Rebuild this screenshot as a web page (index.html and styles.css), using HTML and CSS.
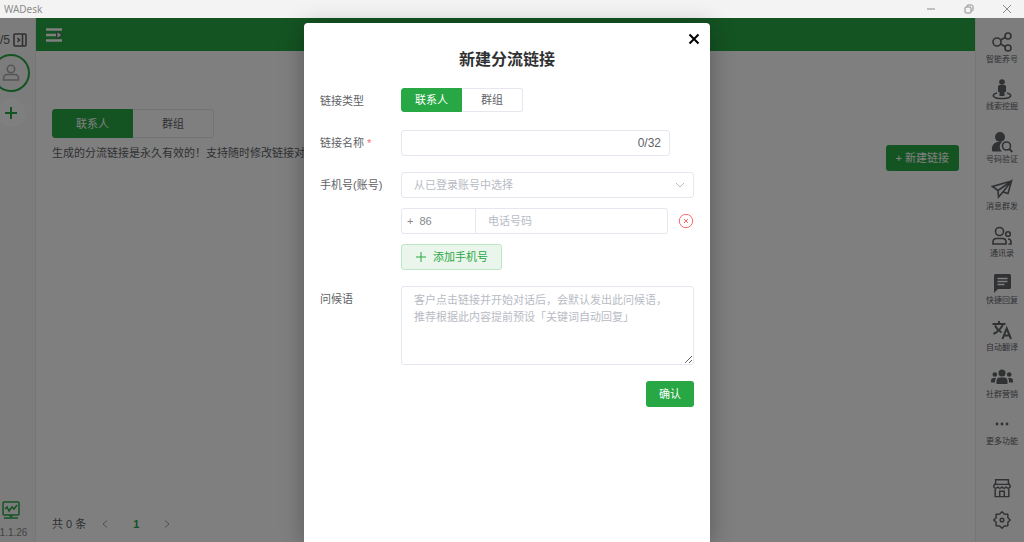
FILE: index.html
```html
<!DOCTYPE html>
<html lang="zh-CN">
<head>
<meta charset="utf-8">
<meta name="viewport" content="width=device-width, initial-scale=1">
<title>WADesk</title>
<link rel="stylesheet" href="styles.css">
</head>
<body class="window">
<header class="titlebar">
  <span class="titlebar-name">WADesk</span>
  <div class="window-controls">
    <button class="plain" aria-label="最小化"><svg width="10" height="10" viewBox="0 0 10 10"><path d="M1 5h8"/></svg></button>
    <button class="plain" aria-label="还原"><svg width="10" height="10" viewBox="0 0 10 10"><rect x="1" y="3" width="6" height="6" rx="1"/><path d="M3 2.6V2q0-1 1-1h3.5Q9 1 9 2.5V6q0 1-1.6 1"/></svg></button>
    <button class="plain" aria-label="关闭"><svg width="10" height="10" viewBox="0 0 10 10"><path d="M1 1l8 8M9 1L1 9"/></svg></button>
  </div>
</header>

<div class="app">
  <aside class="accounts">
    <div class="accounts-count"><span>/5</span>
      <svg class="ico" width="14" height="14" viewBox="0 0 14 14"><rect x="1" y="1" width="12" height="12" rx="1"/><path d="M9.500 1v12M4.500 5l2 2-2 2"/></svg>
    </div>
    <button class="plain avatar" aria-label="账号">
      <svg width="18" height="18" viewBox="0 0 18 18"><circle cx="9" cy="5" r="3.700"/><path d="M1.500 16v-1.500q0-4 4-4h7q4 0 4 4V16z"/></svg>
    </button>
    <button class="plain add-account" aria-label="添加账号">
      <svg width="14" height="14" viewBox="0 0 14 14"><path d="M7 1v12M1 7h12"/></svg>
    </button>
    <div class="accounts-foot">
      <svg class="monitor" width="20" height="20" viewBox="0 0 20 20"><rect x="2" y="2" width="16" height="13" rx="1"/><path d="M4 9l2-2 2 4 3-4 2 2 3-4M3 18h14M8 15l2 1.500 2-1.500"/></svg>
      <span>1.1.26</span>
    </div>
  </aside>

  <main class="page">
    <div class="topbar">
      <button class="plain" aria-label="展开菜单"><svg width="16" height="14" viewBox="0 0 16 14"><path d="M0 1.500h16M0 7h10M0 12.500h16" stroke="#fff" stroke-width="2.400"/><path d="M11 3.500L16 7l-5 3.500z" fill="#fff"/></svg></button>
    </div>
    <div class="content">
      <div class="segments segments-wide" role="radiogroup" aria-label="链接列表">
        <label class="segment"><input type="radio" name="list" checked><span>联系人</span></label>
        <label class="segment"><input type="radio" name="list"><span>群组</span></label>
      </div>
      <div class="content-row">
        <p class="hint">生成的分流链接是永久有效的！支持随时修改链接对应的账号</p>
        <button class="primary">+ 新建链接</button>
      </div>
      <nav class="pager" aria-label="分页">
        <span>共 0 条</span>
        <button class="plain" aria-label="上一页"><svg width="8" height="10" viewBox="0 0 8 10"><path d="M6 1.500L2 5l4 3.500"/></svg></button>
        <button class="plain pager-current">1</button>
        <button class="plain" aria-label="下一页"><svg width="8" height="10" viewBox="0 0 8 10"><path d="M2 1.500L6 5 2 8.500"/></svg></button>
      </nav>
    </div>
  </main>

  <nav class="tools" aria-label="工具">
    <div class="tools-group">
      <button class="plain tool"><svg class="ico" viewBox="0 0 22 22"><circle cx="6" cy="11" r="4"/><circle cx="17" cy="5" r="3"/><circle cx="17" cy="17" r="3"/><path d="M9.500 9l5-2.700M9.500 13l5 2.700"/></svg><span>智能养号</span></button>
      <button class="plain tool"><svg class="solid" viewBox="0 0 22 22"><circle cx="11" cy="4" r="2.800"/><path d="M7 8.500Q7 7 8.500 7h5Q15 7 15 8.500V14h-1.500v4h-5v-4H7z"/><path d="M6 15c-6 1.500-5 5.500 5 5.500s11-4 5-5.500" fill="none" stroke="currentColor" stroke-width="1.600"/></svg><span>线索挖掘</span></button>
    </div>
    <div class="tools-group">
      <button class="plain tool"><svg class="solid" viewBox="0 0 22 22"><circle cx="9" cy="6" r="5"/><path d="M1 20q-1-7 5-9h5a6 6 0 0 0 0 9.500H2z"/><circle cx="15.500" cy="15" r="4" fill="none" stroke="currentColor" stroke-width="1.600"/><path d="M18.300 18l3 3" stroke="currentColor" stroke-width="1.800"/></svg><span>号码验证</span></button>
      <button class="plain tool"><svg class="ico" viewBox="0 0 22 22"><path d="M20.500 3L1.500 8.500l5.500 4L20.500 3l-3.500 12.500-5-1.500-4.500 5-.5-6.500M12 14l8.500-11"/></svg><span>消息群发</span></button>
      <button class="plain tool"><svg class="ico" viewBox="0 0 22 22"><circle cx="8.500" cy="6.500" r="4"/><path d="M2 19v-2q0-3.500 3.500-3.500h6q3.500 0 3.500 3.500v2zM17 14q3 0 3 3v2h-2.500"/><circle cx="17" cy="9" r="2.300"/></svg><span>通讯录</span></button>
      <button class="plain tool"><svg class="solid" viewBox="0 0 22 22"><path d="M3 3.500Q3 2 4.500 2h14Q20 2 20 3.500v12q0 1.500-1.500 1.500H7l-4 4z"/><path d="M6.500 6.500h10M6.500 9.500h10M6.500 12.500h7" stroke="#fff" stroke-width="1.400"/></svg><span>快捷回复</span></button>
      <button class="plain tool"><svg class="ico" viewBox="0 0 22 22"><path d="M1.500 5h13M8 2v3M2.500 15Q10 11 12 5M4 6.500q2 4.500 6.500 7" stroke-width="2"/><path d="M11.500 20l4.200-10.500L20 20M13 16.500h5.500" stroke-width="2"/></svg><span>自动翻译</span></button>
      <button class="plain tool"><svg class="solid" viewBox="0 0 22 22"><circle cx="11" cy="7" r="3.500"/><circle cx="3.800" cy="8.500" r="2.300"/><circle cx="18.200" cy="8.500" r="2.300"/><path d="M5.500 18v-3q0-3.500 3.500-3.500h4q3.500 0 3.500 3.500v3zM0 16.500V15q0-3 2.500-3H5q-1.200 1.500-1 4.500zM22 16.500V15q0-3-2.500-3H17q1.200 1.500 1 4.500z"/></svg><span>社群营销</span></button>
      <button class="plain tool"><svg class="solid" viewBox="0 0 22 22"><circle cx="6" cy="11" r="1.400"/><circle cx="11" cy="11" r="1.400"/><circle cx="16" cy="11" r="1.400"/></svg><span>更多功能</span></button>
    </div>
    <div class="tools-foot">
      <button class="plain tool" aria-label="商店"><svg class="ico" viewBox="0 0 22 22"><path d="M4 2h14v5H4zM4 5.500L2 8.500V10q2 2.500 4.500 0 2 2.500 4.500 0 2.200 2.500 4.500 0 2.200 2.500 4.500 0V8.500l-2-3M3.500 12v8.500h15V12M8.500 20.500v-6h5v6"/></svg></button>
      <button class="plain tool" aria-label="设置"><svg class="ico" viewBox="0 0 22 22"><path d="M11 2l2.500 2.500 3.900.1.100 3.900L20 11l-2.500 2.500-.1 3.900-3.900.1L11 20l-2.500-2.500-3.900-.1-.1-3.900L2 11l2.500-2.500.1-3.900 3.900-.1z" stroke-linejoin="round"/><circle cx="11" cy="11" r="2"/></svg></button>
    </div>
  </nav>

  <div class="overlay">
    <section class="dialog" role="dialog" aria-modal="true" aria-labelledby="dialog-title">
      <button class="plain dialog-close" aria-label="关闭"><svg width="12" height="12" viewBox="0 0 12 12"><path d="M1.500 1.500l9 9M10.500 1.500l-9 9"/></svg></button>
      <h1 class="dialog-title" id="dialog-title">新建分流链接</h1>
      <form class="form">
        <span class="form-label" id="type-label">链接类型</span>
        <div class="segments" role="radiogroup" aria-labelledby="type-label">
          <label class="segment"><input type="radio" name="type" checked><span>联系人</span></label>
          <label class="segment"><input type="radio" name="type"><span>群组</span></label>
        </div>

        <label class="form-label form-label-name" for="link-name">链接名称 <span class="required">*</span></label>
        <div class="field field-name">
          <input id="link-name" type="text" maxlength="32">
          <span class="counter">0/32</span>
        </div>

        <label class="form-label" for="account">手机号(账号)</label>
        <div class="phones">
          <div class="field field-select">
            <select id="account"><option>从已登录账号中选择</option></select>
            <svg width="10" height="10" viewBox="0 0 10 10"><path d="M1 3l4 4 4-4"/></svg>
          </div>
          <div class="phone-row">
            <div class="field phone">
              <label class="phone-code"><span>+</span><input type="text" value="86" aria-label="国家代码"></label>
              <input class="phone-number" type="tel" placeholder="电话号码" aria-label="电话号码">
            </div>
            <button type="button" class="plain remove" aria-label="删除手机号"><svg width="16" height="16" viewBox="0 0 16 16"><circle cx="8" cy="8" r="6.700"/><path d="M6 6l4 4M10 6l-4 4"/></svg></button>
          </div>
          <button type="button" class="add-phone"><svg width="12" height="12" viewBox="0 0 12 12"><path d="M6 1v10M1 6h10"/></svg>添加手机号</button>
        </div>

        <label class="form-label" for="greeting">问候语</label>
        <textarea class="greeting" id="greeting" placeholder="客户点击链接并开始对话后，会默认发出此问候语，推荐根据此内容提前预设「关键词自动回复」"></textarea>

        <button type="button" class="primary submit">确认</button>
      </form>
    </section>
  </div>
</div>
</body>
</html>
```

FILE: styles.css
```css
:root {
  --green: #28a745;
  --text: #606266;
  --line: #e4e7ed;
  --faint: #b8bbc4;
}

* { box-sizing: border-box; }

.window {
  margin: 0;
  height: 100vh;
  display: flex;
  flex-direction: column;
  overflow: hidden;
  font: 11px/16px "Liberation Sans", "Noto Sans CJK SC", sans-serif;
  color: var(--text);
}

button, input, select, textarea { font: inherit; color: inherit; }
svg { display: block; fill: none; stroke: currentColor; flex: none; }

.plain {
  display: flex;
  align-items: center;
  justify-content: center;
  padding: 0;
  border: 0;
  background: none;
}

.ico { stroke-width: 1.6; }
.solid { fill: currentColor; stroke: none; }

/* Title bar */
.titlebar {
  display: flex;
  flex: none;
  justify-content: space-between;
  align-items: center;
  height: 18px;
  padding: 0 12px 0 4px;
  background: #f3f3f3;
  color: #8c8c8c;
  font-family: "Noto Sans", sans-serif;
  font-size: 10px;
}
.window-controls { display: flex; gap: 28px; }

.app {
  position: relative;
  display: flex;
  flex: 1;
  min-height: 0;
  background: #fff;
}

/* Accounts column */
.accounts {
  display: flex;
  flex: none;
  flex-direction: column;
  align-items: center;
  width: 36px;
  padding: 14px 14px 4px 0;
  overflow: hidden;
  background: #f8f8f8;
  border-right: 1px solid #ededed;
}
.accounts-count {
  display: flex;
  align-items: center;
  align-self: flex-start;
  gap: 3px;
  margin-bottom: 6px;
  font-size: 12px;
}
.avatar {
  flex: none;
  width: 38px;
  height: 38px;
  border: 2px solid var(--green);
  border-radius: 50%;
  color: #aaa;
}
.add-account {
  flex: none;
  width: 28px;
  height: 28px;
  margin-top: 7px;
  border-radius: 50%;
  background: #fff;
  color: var(--green);
}
.add-account svg { stroke-width: 2; }
.avatar svg, .monitor { stroke-width: 1.5; }
.accounts-foot {
  display: flex;
  flex-direction: column;
  align-items: center;
  gap: 8px;
  margin-top: auto;
  color: #85878c;
  font-size: 10px;
  line-height: 10px;
}
.accounts-foot span { padding-left: 6px; }
.monitor { color: var(--green); }

/* Page behind the dialog */
.page {
  display: flex;
  flex: 1;
  flex-direction: column;
  min-width: 0;
}
.topbar {
  display: flex;
  flex: none;
  align-items: center;
  height: 33px;
  padding: 0 10px;
  background: var(--green);
}
.content {
  display: flex;
  flex: 1;
  flex-direction: column;
  padding: 58px 16px 10px;
}
.content-row {
  display: flex;
  justify-content: space-between;
  align-items: flex-start;
  padding-top: 7px;
}
.hint { margin: 0; }
.primary {
  height: 26px;
  padding: 0 10px;
  border: 0;
  border-radius: 3px;
  background: var(--green);
  color: #fff;
}
.pager {
  display: flex;
  align-items: center;
  gap: 15px;
  margin-top: auto;
}
.pager > span { margin-right: -4px; }
.pager button { width: 16px; height: 16px; }
.pager svg { color: #a0a0a0; }
.pager .pager-current { color: var(--green); font-weight: bold; }

/* Segmented radios */
.segments {
  display: grid;
  grid-template-columns: 1fr 1fr;
  width: 122px;
  height: 24px;
}
.segments-wide { width: 162px; height: 29px; }
.segment { position: relative; display: flex; }
.segment input {
  position: absolute;
  inset: 0;
  margin: 0;
  opacity: 0;
}
.segment span {
  display: flex;
  flex: 1;
  align-items: center;
  justify-content: center;
  border: 1px solid var(--line);
}
.segment:first-child span { border-radius: 3px 0 0 3px; }
.segment:last-child span { border-left: 0; border-radius: 0 3px 3px 0; }
.segment input:checked + span {
  border-color: var(--green);
  background: var(--green);
  color: #fff;
}

/* Tools column */
.tools {
  display: flex;
  flex: none;
  flex-direction: column;
  gap: 6px;
  width: 49px;
  padding: 13px 0 10px 4px;
  background: #fafafa;
  border-left: 1px solid #ededed;
}
.tool {
  flex-direction: column;
  gap: 1px;
  width: 100%;
  height: 47px;
  flex: none;
  justify-content: flex-start;
  font-size: 8px;
  line-height: 12px;
}
.tool svg { width: 22px; height: 22px; }
.tools-foot { display: flex; flex-direction: column; gap: 10px; margin-top: auto; }
.tools-foot .tool { height: 22px; }
.tools-foot svg { width: 20px; height: 20px; }

/* Dialog */
.overlay {
  position: absolute;
  inset: 0;
  display: flex;
  justify-content: center;
  padding: 5px 10px 0 0;
  background: rgba(0, 0, 0, 0.5);
}
.dialog {
  position: relative;
  width: 40%;
  min-width: 406px;
  padding: 25px 16px 16px;
  border-radius: 4px 4px 0 0;
  background: #fff;
  box-shadow: 0 4px 24px rgba(0, 0, 0, 0.3);
}
.dialog-close {
  position: absolute;
  top: 10px;
  right: 10px;
  color: #000;
}
.dialog-close svg { stroke-width: 2; }
.dialog-title {
  margin: 0 0 16px;
  font-size: 16px;
  line-height: 24px;
  text-align: center;
  color: #303133;
}
.form {
  display: grid;
  grid-template-columns: 81px 1fr;
  row-gap: 16px;
}
.form-label { padding-top: 5px; }
.form-label-name { padding-top: 7px; }
.required { color: #f56c6c; }
.field {
  display: flex;
  align-items: center;
  height: 26px;
  border: 1px solid var(--line);
  border-radius: 3px;
}
.field input, .field select {
  flex: 1;
  min-width: 0;
  height: 100%;
  padding: 0 12px;
  border: 0;
  outline: 0;
  background: none;
}
.field-name { margin: 2px 24px 0 0; }
.counter { padding-right: 8px; font-size: 12px; }
.phones {
  display: flex;
  flex-direction: column;
  gap: 10px;
}
.field-select { color: var(--faint); }
.field-select select { appearance: none; }
.field-select svg { margin-right: 8px; }
.phone-row { display: flex; align-items: center; gap: 10px; }
.phone { flex: 1; }
.phone-code {
  display: flex;
  align-items: center;
  width: 74px;
  height: 100%;
  padding-left: 5px;
  border-right: 1px solid var(--line);
  color: #85878c;
}
.phone .phone-code input { padding: 0 6px; }
.remove { color: #f56c6c; }
.add-phone {
  display: flex;
  align-items: center;
  align-self: flex-start;
  gap: 6px;
  height: 26px;
  padding: 0 13px;
  border: 1px solid #bfe5c7;
  border-radius: 3px;
  background: #eaf6ec;
  color: var(--green);
}
.greeting {
  display: block;
  width: 100%;
  height: 79px;
  padding: 5px 20px 5px 12px;
  border: 1px solid var(--line);
  border-radius: 3px;
  outline: 0;
  line-height: 17px;
  resize: vertical;
}
::placeholder { color: var(--faint); opacity: 1; }
.submit { grid-column: 2; justify-self: end; padding: 0 13px; }
```
